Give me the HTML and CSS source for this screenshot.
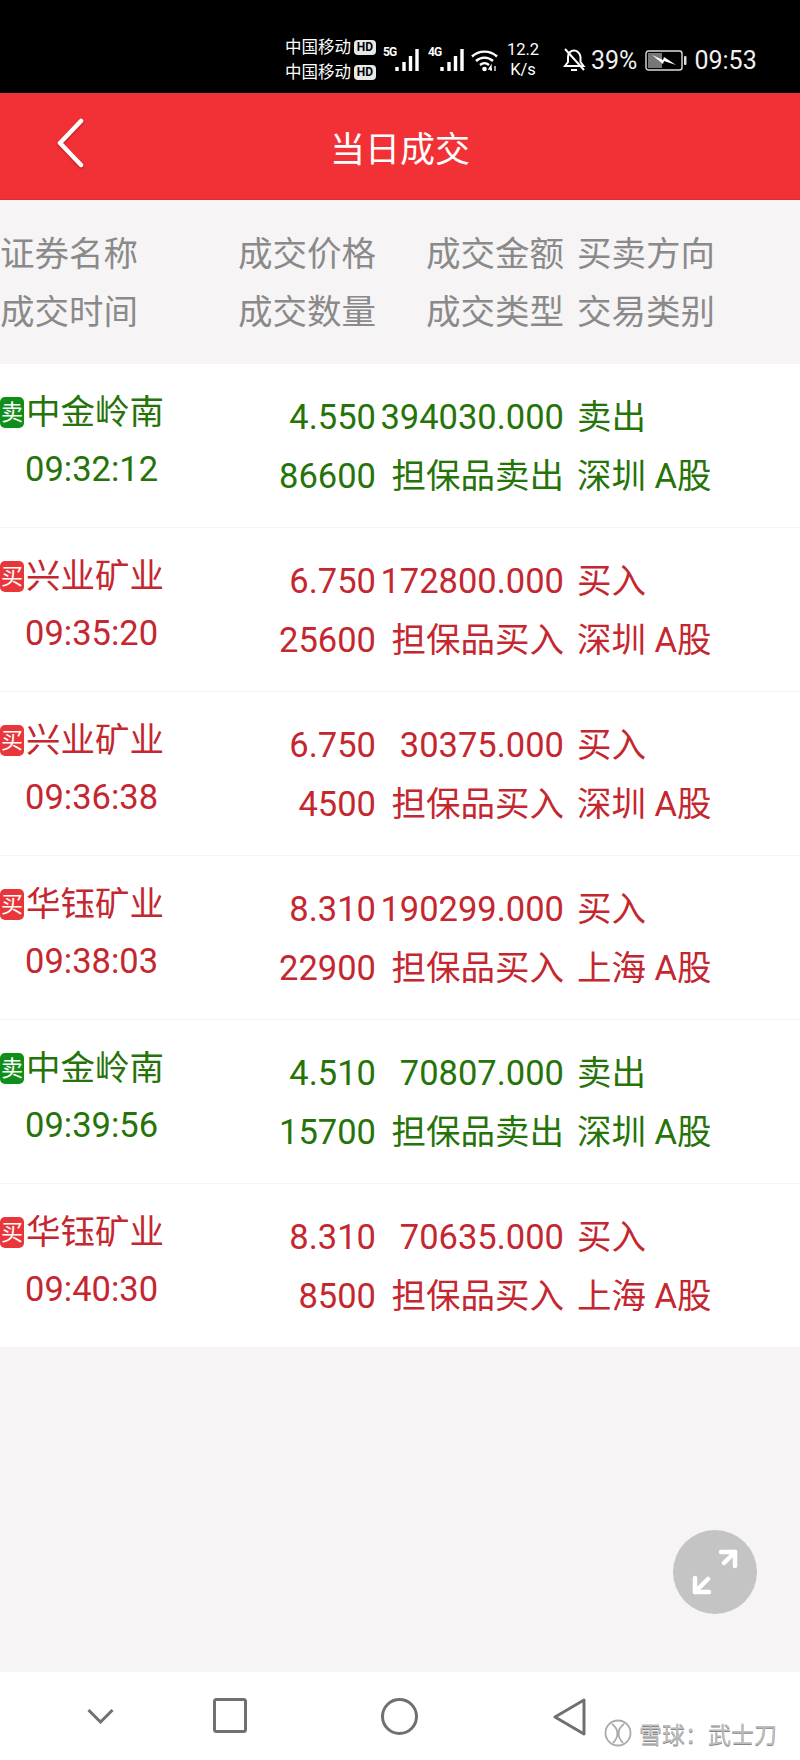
FILE: index.html
```html
<!doctype html>
<html lang="zh-CN">
<head>
	<meta charset="UTF-8" />
	<title>当日成交</title>
	<link rel="stylesheet" href="styles.css">
</head>
<body>
<div class="phone">
	<div class="status">
		<div class="carriers">
			<div class="carrier">中国移动<span class="hd">HD</span></div>
			<div class="carrier">中国移动<span class="hd">HD</span></div>
		</div>
		<span class="net net5">5G</span>
		<svg class="signal" width="25" height="24" viewBox="0 0 25 24"><path d="M2 23v-4M9 23v-9M15.500 23V8M22 23V1" stroke="#fff" stroke-width="3.400" fill="none"/></svg>
		<span class="net net4">4G</span>
		<svg class="signal" width="25" height="24" viewBox="0 0 25 24"><path d="M2 23v-4M9 23v-9M15.500 23V8M22 23V1" stroke="#fff" stroke-width="3.400" fill="none"/></svg>
		<svg class="wifi" width="27" height="23" viewBox="0 0 27 23"><g fill="none" stroke="#fff" stroke-width="2.400"><path d="M1 7.500C8 1 19 1 26 7.500"/><path d="M5 12c5-4.500 12-4.500 17 0"/><path d="M9 16c3-2.500 6-2.500 9 0"/></g><circle cx="13.500" cy="20" r="2.300" fill="#fff"/><path d="M20 22v-5l-2 3h3M24 17v5" stroke="#fff" stroke-width="1.300" fill="none"/></svg>
		<div class="speed"><div>12.2</div><div>K/s</div></div>
		<svg class="bell" width="23" height="24" viewBox="0 0 23 24"><g fill="none" stroke="#fff" stroke-width="2"><path d="M5 9c0-4 3-6.500 6-6.500s6 2.500 6.500 6.500v5l3 4H2l3-4z"/><path d="M8 22h6"/><path d="M2 1l19 21"/></g></svg>
		<span class="pct">39%</span>
		<svg class="batt" width="42" height="21" viewBox="0 0 42 21"><rect x="1" y="1" width="36" height="19" rx="2.500" fill="none" stroke="#ddd" stroke-width="1.400"/><rect x="3" y="3" width="14" height="15" fill="#777"/><path d="M7 5l11 5 1-3 12 8-12-4-1 3z" fill="#fff"/><rect x="39" y="6" width="2.500" height="9" rx="1" fill="#ddd"/></svg>
		<span class="clock">09:53</span>
	</div>

	<div class="topbar">
		<svg class="back" width="30" height="50" viewBox="0 0 30 50"><path d="M26 3L5 25l21 22" fill="none" stroke="#fff" stroke-width="4.500" stroke-linecap="round" stroke-linejoin="round"/></svg>
		<span class="title">当日成交</span>
	</div>

	<div class="grid heading">
		<div class="col"><div>证券名称</div><div>成交时间</div></div>
		<div class="col num"><div>成交价格</div><div>成交数量</div></div>
		<div class="col num"><div>成交金额</div><div>成交类型</div></div>
		<div class="col side"><div>买卖方向</div><div>交易类别</div></div>
	</div>

	<div class="list">
		<div class="grid row sell">
			<div class="col first"><div class="name"><span class="tag">卖</span>中金岭南</div><div class="time">09:32:12</div></div>
			<div class="col num"><div>4.550</div><div>86600</div></div>
			<div class="col num"><div>394030.000</div><div>担保品卖出</div></div>
			<div class="col side"><div>卖出</div><div>深圳 A股</div></div>
		</div>
		<div class="grid row buy">
			<div class="col first"><div class="name"><span class="tag">买</span>兴业矿业</div><div class="time">09:35:20</div></div>
			<div class="col num"><div>6.750</div><div>25600</div></div>
			<div class="col num"><div>172800.000</div><div>担保品买入</div></div>
			<div class="col side"><div>买入</div><div>深圳 A股</div></div>
		</div>
		<div class="grid row buy">
			<div class="col first"><div class="name"><span class="tag">买</span>兴业矿业</div><div class="time">09:36:38</div></div>
			<div class="col num"><div>6.750</div><div>4500</div></div>
			<div class="col num"><div>30375.000</div><div>担保品买入</div></div>
			<div class="col side"><div>买入</div><div>深圳 A股</div></div>
		</div>
		<div class="grid row buy">
			<div class="col first"><div class="name"><span class="tag">买</span>华钰矿业</div><div class="time">09:38:03</div></div>
			<div class="col num"><div>8.310</div><div>22900</div></div>
			<div class="col num"><div>190299.000</div><div>担保品买入</div></div>
			<div class="col side"><div>买入</div><div>上海 A股</div></div>
		</div>
		<div class="grid row sell">
			<div class="col first"><div class="name"><span class="tag">卖</span>中金岭南</div><div class="time">09:39:56</div></div>
			<div class="col num"><div>4.510</div><div>15700</div></div>
			<div class="col num"><div>70807.000</div><div>担保品卖出</div></div>
			<div class="col side"><div>卖出</div><div>深圳 A股</div></div>
		</div>
		<div class="grid row buy">
			<div class="col first"><div class="name"><span class="tag">买</span>华钰矿业</div><div class="time">09:40:30</div></div>
			<div class="col num"><div>8.310</div><div>8500</div></div>
			<div class="col num"><div>70635.000</div><div>担保品买入</div></div>
			<div class="col side"><div>买入</div><div>上海 A股</div></div>
		</div>
	</div>

	<div class="spacer"></div>

	<div class="navbar">
		<svg width="27" height="16" viewBox="0 0 27 16"><path d="M1.500 2L13.500 14 25.500 2" fill="none" stroke="#707070" stroke-width="3"/></svg>
		<svg width="34" height="35" viewBox="0 0 34 35"><rect x="1.500" y="1.500" width="31" height="32" rx="2" fill="none" stroke="#707070" stroke-width="3"/></svg>
		<svg width="37" height="37" viewBox="0 0 37 37"><circle cx="18.500" cy="18.500" r="17" fill="none" stroke="#707070" stroke-width="3"/></svg>
		<svg width="33" height="38" viewBox="0 0 33 38"><path d="M31 2L2 19l29 17z" fill="none" stroke="#707070" stroke-width="3" stroke-linejoin="round"/></svg>
	</div>

	<div class="fab">
		<svg width="46" height="46" viewBox="0 0 46 46"><g fill="none" stroke="#fff" stroke-width="4.500" stroke-linecap="round" stroke-linejoin="round"><path d="M29 3h14v14"/><path d="M43 3L32 14"/><path d="M3 29v14h14"/><path d="M3 43l13-13"/></g></svg>
	</div>

	<div class="mark">
		<svg width="28" height="28" viewBox="0 0 28 28"><g fill="none" stroke="#aaa" stroke-width="1.800"><circle cx="14" cy="14" r="12.500"/><path d="M8 5c7 5 7 13 1 19M20 5c-7 5-7 13-1 19"/></g></svg>
		<span>雪球：武士刀</span>
	</div>
</div>
</body>
</html>
```

FILE: styles.css
```css
* {box-sizing:border-box;}
body {margin:0; font-family:Roboto, "Noto Sans CJK SC", sans-serif;}
.phone {position:relative; width:800px; height:1760px; background:#f7f4f5; display:flex; flex-direction:column; overflow:hidden;}

/* status bar */
.status {height:93px; background:#000; color:#fff; display:flex; align-items:center; padding:27px 0 0 285px;}
.carriers {width:98px; font-size:16.500px; line-height:25px;}
.carrier {display:flex; align-items:center; white-space:nowrap;}
.hd {margin-left:3px; background:#e8e8e8; color:#000; border-radius:4px; font-size:12px; line-height:15px; height:15px; width:22px; text-align:center; font-weight:700;}
.net {font-size:12px; font-weight:700; letter-spacing:-1px; align-self:flex-start; margin-top:18px; width:12px; line-height:14px;}
.net4 {margin-left:8px;}
.wifi {margin-left:6px;}
.speed {width:44px; margin-left:3px; font-size:16.500px; line-height:20px; text-align:center;}
.bell {margin-left:18px;}
.pct {margin-left:5px; font-size:25px; color:#f0f0f0;}
.batt {margin-left:8px;}
.clock {margin-left:7px; font-size:25px; color:#f0f0f0;}

/* title */
.topbar {position:relative; height:107px; background:#f13136; border-bottom:1px solid #d92e33; display:flex; align-items:center; justify-content:center;}
.title {color:#fff; font-size:35px;}
.back {position:absolute; left:55px; top:25px; filter:drop-shadow(0 1px 1px rgba(120,0,0,.5));}

/* table */
.grid {display:grid; grid-template-columns:200px 176px 188px 236px; font-size:34.500px;}
.num {text-align:right;}
.side {padding-left:13px;}
.heading {height:164px; padding-top:25px; line-height:58px; color:#8a8a8a;}
.list {background:#fff;}
.row {height:164px; padding-top:24px; line-height:59px; border-bottom:1px solid #f6f3f4; white-space:nowrap;}
.buy {color:#c4272f;}
.sell {color:#267309;}
.first {margin-top:-4px; line-height:57px;}
.name {display:flex; align-items:center;}
.tag {width:24px; height:31px; margin-right:2px; border-radius:5px; color:#fff; font-size:22px; line-height:31px; text-align:center; flex-shrink:0;}
.buy .tag {background:#e8363a;}
.sell .tag {background:#0f8f1a;}
.time {padding-left:25px;}
.spacer {flex:1;}

/* bottom */
.navbar {height:88px; background:#fff; display:flex; align-items:flex-start; padding:26px 0 0 87px;}
.navbar svg:nth-child(1) {margin-top:10px;}
.navbar svg:nth-child(2) {margin-left:99px;}
.navbar svg:nth-child(3) {margin-left:134px;}
.navbar svg:nth-child(4) {margin-left:135px;}
.fab {position:absolute; left:673px; top:1530px; width:84px; height:84px; border-radius:50%; background:#c4c4c4; display:flex; align-items:center; justify-content:center;}
.mark {position:absolute; left:604px; top:1716px; display:flex; align-items:center; gap:7px; font-size:23px; color:#bdbdbd; text-shadow:0 1px 0 #888;}
```
